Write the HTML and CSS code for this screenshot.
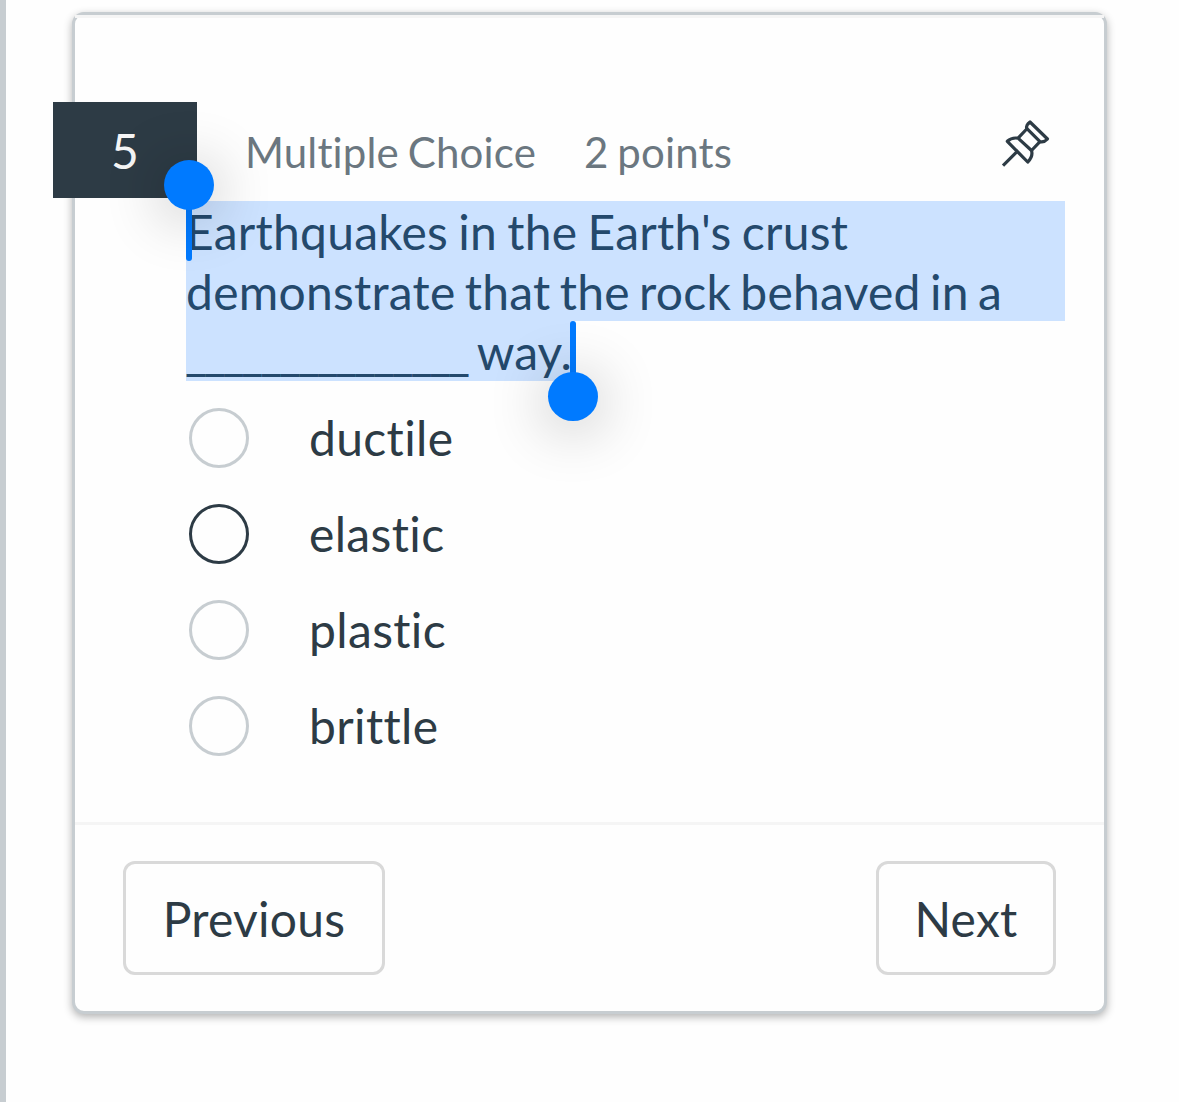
FILE: index.html
```html
<!DOCTYPE html>
<html lang="en">
<head>
    <meta charset="UTF-8">
    <meta name="viewport" content="width=device-width, initial-scale=1.0">
    <title>Quiz - Question 5</title>
    <link rel="stylesheet" href="styles.css">
</head>
<body>

<main class="page">
    <form class="card">
        <div class="question">
            <header class="question-header">
                <span class="number">5</span>
                <span class="type">Multiple Choice</span>
                <span class="points">2 points</span>
                <svg class="pin" viewBox="0 0 49 49" aria-label="Pin question">
                    <path d="M29 3L46.5 20Q43 23.8 39 22.7L25.7 9.4Q25 6 29 3Z"/>
                    <path d="M25.7 10L17.3 18.8M39 22.7L31 31"/>
                    <path d="M6.3 22.3Q11 18 17.3 19.3L30.5 31.5Q32.3 37.5 26.7 43Z"/>
                    <path d="M15.5 33.2L2 46.7"/>
                </svg>
            </header>

            <div class="prompt">
                <span class="line first">Earthquakes in the Earth's crust</span>
                <span class="line">demonstrate that the rock behaved in a</span>
                <span class="line last"><span class="blank">_______________</span> way.</span>
                <i class="handle start"></i>
                <i class="handle end"></i>
            </div>

            <div class="options">
                <label class="option"><input type="radio" name="answer">ductile</label>
                <label class="option"><input type="radio" name="answer" class="active">elastic</label>
                <label class="option"><input type="radio" name="answer">plastic</label>
                <label class="option"><input type="radio" name="answer">brittle</label>
            </div>
        </div>

        <footer class="buttons">
            <button type="button" class="previous">Previous</button>
            <button type="button" class="next">Next</button>
        </footer>
    </form>
</main>

</body>
</html>
```
FILE: styles.css
```css
* {
    box-sizing: border-box;
}

body {
    margin: 0;
    font-family: Lato, sans-serif;
    font-size: 48px;
    font-variant-ligatures: none;
    color: #2d3b45;
    background: #fefefe;
}

.page {
    height: 1102px;
    padding: 12px 72px 0 66px;
    border-left: 6px solid #c7cdd1;
    overflow: hidden;
}

.card {
    display: flex;
    flex-direction: column;
    height: 1002px;
    border: 3px solid #c7cdd1;
    border-radius: 12px;
    background: #fefefe;
    box-shadow: 0 3px 9px rgba(0, 0, 0, 0.3);
}

.question {
    flex: 1;
    padding: 84px 39px 0 111px;
    border-top: 3px solid #f5f5f5;
}

.question-header {
    display: flex;
    align-items: center;
    height: 96px;
    margin-left: -133px;
    font-size: 42px;
    letter-spacing: 0.15px;
    word-spacing: -2px;
    color: #6b7780;
    white-space: nowrap;
}

.number {
    width: 144px;
    height: 96px;
    line-height: 98px;
    margin-right: 48px;
    font-size: 48px;
    text-align: center;
    color: #f5f5f5;
    background: #2d3b45;
}

.type {
    margin-right: 48px;
}

.type, .points {
    padding-top: 4px;
}

.pin {
    width: 49px;
    height: 49px;
    margin: 0 15px 13px auto;
    fill: none;
    stroke: #2d3b45;
    stroke-width: 3.2;
    stroke-linejoin: round;
}

.prompt {
    position: relative;
    height: 180px;
    margin-top: 3px;
    line-height: 61px;
    letter-spacing: 0.25px;
    word-spacing: -3.3px;
    color: #24496c;
    white-space: nowrap;
}

.line {
    display: block;
    height: 60px;
    background: #cce2ff;
}

.first {
    word-spacing: -2.4px;
}

.last {
    width: 387px;
    word-spacing: -1.3px;
    letter-spacing: 0;
}

.blank {
    margin-left: -1px;
    letter-spacing: -3.25px;
}

/* text selection handles */
.handle {
    position: absolute;
    width: 6px;
    height: 60px;
    border-radius: 3px;
    background: #007aff;
}

.handle::after {
    content: "";
    position: absolute;
    left: -22px;
    width: 50px;
    height: 50px;
    border-radius: 50%;
    background: #007aff;
    box-shadow: 0 6px 60px rgba(0, 0, 0, 0.3);
}

.start {
    left: 0;
    top: 0;
}

.start::after {
    top: -41px;
}

.end {
    left: 384px;
    top: 120px;
}

.end::after {
    top: 51px;
    height: 49px;
}

.options {
    display: flex;
    flex-direction: column;
    gap: 36px;
    padding: 27px 0 0 3px;
    letter-spacing: 0.35px;
}

.option {
    display: flex;
    align-items: center;
    gap: 60px;
    height: 60px;
    line-height: 60px;
}

.option input {
    appearance: none;
    width: 60px;
    height: 60px;
    margin: 0;
    border: 3px solid #c7cdd1;
    border-radius: 50%;
}

.option .active {
    border-color: #2d3b45;
}

.buttons {
    display: flex;
    justify-content: space-between;
    padding: 36px 48px;
    border-top: 3px solid #f5f5f5;
}

button {
    height: 114px;
    padding: 0;
    border: 3px solid #d9d9d9;
    border-radius: 12px;
    font: inherit;
    letter-spacing: 0.25px;
    color: #2d3b45;
    background: #fefefe;
}

.previous {
    width: 262px;
}

.next {
    width: 180px;
}
```
